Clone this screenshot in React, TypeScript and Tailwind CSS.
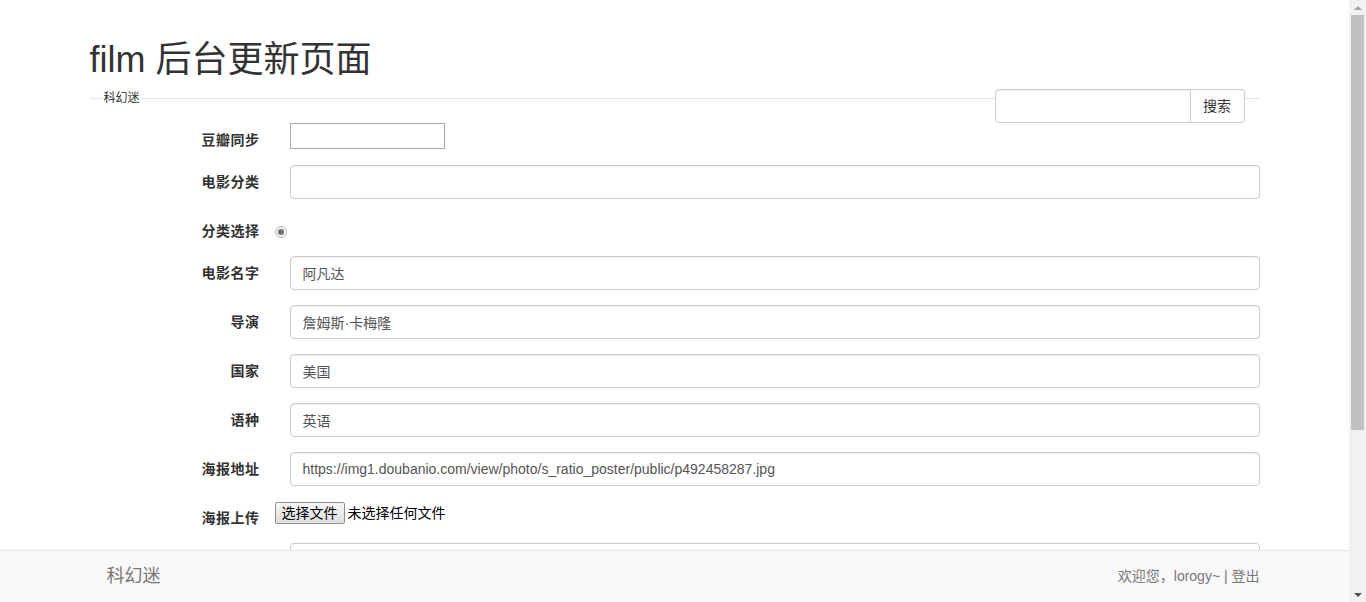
import React from "react";

const font = "font-['Liberation_Sans','Noto_Sans_CJK_SC',sans-serif]";

const fields = [
  { label: "电影名字", value: "阿凡达" },
  { label: "导演", value: "詹姆斯·卡梅隆" },
  { label: "国家", value: "美国" },
  { label: "语种", value: "英语" },
  { label: "海报地址", value: "https://img1.doubanio.com/view/photo/s_ratio_poster/public/p492458287.jpg" },
];

const Label: React.FC<{ text: string }> = ({ text }) => (
  <div className="w-[185px] shrink-0 pr-[15px] pt-[7px] text-right text-[14px] leading-[20px] h-[27px]">
    <span className="font-bold text-[#333] tracking-[0.5px]">{text}</span>
  </div>
);

const TextInput: React.FC<{ value?: string }> = ({ value = "" }) => (
  <div className="flex-1 pl-[15px]">
    <input
      readOnly
      value={value}
      className="block w-full h-[34px] px-[12px] text-[14px] text-[#555] bg-white border border-[#ccc] rounded-[4px] shadow-[inset_0_1px_1px_rgba(0,0,0,0.075)] outline-none"
    />
  </div>
);

const Scrollbar: React.FC = () => (
  <div className="w-[17px] shrink-0 h-full bg-[#f1f1f1] flex flex-col items-center">
    <div className="h-[15px] flex items-center justify-center">
      <span className="w-0 h-0 border-x-[4px] border-x-transparent border-b-[4px] border-b-[#a3a3a3]" />
    </div>
    <div className="w-[13px] h-[415px] bg-[#c1c1c1]" />
    <div className="flex-1" />
    <div className="h-[15px] flex items-center justify-center">
      <span className="w-0 h-0 border-x-[4px] border-x-transparent border-t-[4px] border-t-[#505050]" />
    </div>
  </div>
);

export default function App() {
  return (
    <div className={`h-screen flex overflow-hidden bg-white text-[#333] ${font}`}>
      <div className="flex-1 overflow-hidden">
        <div className="w-[1170px] mx-auto pb-[140px]">
          <h1 className="pt-[40px] text-[36px] leading-[40px] font-normal text-[#333]">film 后台更新页面</h1>

          {/* legend + search */}
          <div className="relative mt-[9px] h-[34px] flex items-start">
            <div className="absolute left-0 right-0 top-[9px] border-t border-[#e5e5e5]" />
            <span className="relative ml-[12px] mt-[1px] px-[2px] bg-white text-[12px] leading-[16px] text-[#333]">科幻迷</span>
            <div className="relative ml-auto mr-[15px] flex w-[250px] h-[34px]">
              <input className="flex-1 min-w-0 h-full px-[12px] border border-[#ccc] rounded-l-[4px] shadow-[inset_0_1px_1px_rgba(0,0,0,0.075)] outline-none bg-white" />
              <button className="w-[54px] h-full border border-l-0 border-[#ccc] rounded-r-[4px] bg-white text-[14px] text-[#333]">搜索</button>
            </div>
          </div>

          {/* form */}
          <div className="flex flex-col gap-[15px]">
            <div className="flex">
              <Label text="豆瓣同步" />
              <div className="pl-[15px]">
                <input className="block w-[155px] h-[26px] border border-[#a9a9a9] bg-white outline-none" />
              </div>
            </div>

            <div className="flex">
              <Label text="电影分类" />
              <TextInput />
            </div>

            <div className="flex">
              <Label text="分类选择" />
              <div className="pt-[12px]">
                <span className="flex items-center justify-center w-[12px] h-[12px] rounded-full border border-[#b5b5b5] bg-[#f4f4f4]">
                  <span className="w-[6px] h-[6px] rounded-full bg-[#6f6f6f]" />
                </span>
              </div>
            </div>

            {fields.map((f) => (
              <div key={f.label} className="flex">
                <Label text={f.label} />
                <TextInput value={f.value} />
              </div>
            ))}

            <div className="flex">
              <Label text="海报上传" />
              <div className="pt-[1px] flex items-center h-[23px]">
                <button className="h-[22px] px-[6px] border border-[#8f8f8f] rounded-[2px] bg-gradient-to-b from-[#f6f6f6] to-[#dedede] text-[14px] leading-[18px] text-black">选择文件</button>
                <span className="ml-[3px] text-[14px] text-black">未选择任何文件</span>
              </div>
            </div>

            <div className="flex">
              <Label text="简介" />
              <div className="flex-1 pl-[15px]">
                <textarea readOnly className="block w-full h-[120px] border border-[#ccc] rounded-[4px] outline-none" />
              </div>
            </div>
          </div>
        </div>
      </div>

      <Scrollbar />

      {/* fixed footer */}
      <div className="fixed bottom-0 left-0 right-[17px] h-[52px] bg-[#f8f8f8] border-t border-[#e7e7e7]">
        <div className="w-[1170px] mx-auto h-full flex items-center justify-between">
          <span className="ml-[17px] text-[18px] text-[#777]">科幻迷</span>
          <span className="text-[14px] text-[#777]">欢迎您，lorogy~ | 登出</span>
        </div>
      </div>
    </div>
  );
}
